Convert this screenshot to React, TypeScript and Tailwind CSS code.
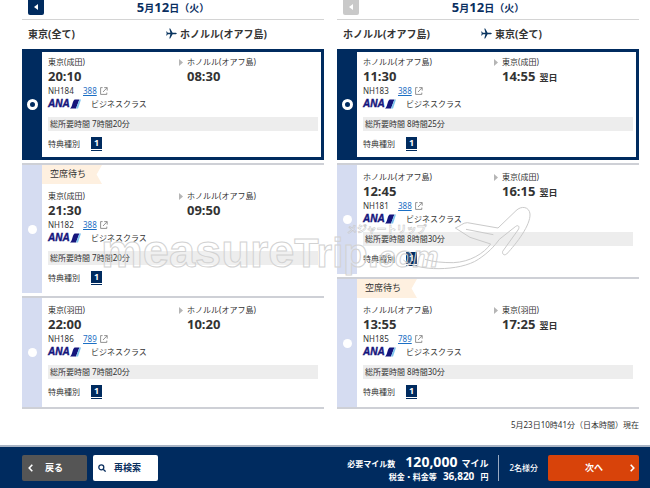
import React from "react";

interface Flight {
  from: string;
  dep: string;
  to: string;
  arr: string;
  nextDay?: boolean;
  no: string;
  craft: string;
  duration: string;
  waiting?: boolean;
}

interface Leg {
  id: string;
  from: string;
  to: string;
  prevDisabled: boolean;
  flights: Flight[];
}

const HNL = "ホノルル(オアフ島)";

const legs: Leg[] = [
  {
    id: "outbound",
    from: "東京(全て)",
    to: HNL,
    prevDisabled: false,
    flights: [
      { from: "東京(成田)", dep: "20:10", to: HNL, arr: "08:30", no: "NH184", craft: "388", duration: "7時間20分" },
      { from: "東京(成田)", dep: "21:30", to: HNL, arr: "09:50", no: "NH182", craft: "388", duration: "7時間20分", waiting: true },
      { from: "東京(羽田)", dep: "22:00", to: HNL, arr: "10:20", no: "NH186", craft: "789", duration: "7時間20分" },
    ],
  },
  {
    id: "inbound",
    from: HNL,
    to: "東京(全て)",
    prevDisabled: true,
    flights: [
      { from: HNL, dep: "11:30", to: "東京(成田)", arr: "14:55", nextDay: true, no: "NH183", craft: "388", duration: "8時間25分" },
      { from: HNL, dep: "12:45", to: "東京(成田)", arr: "16:15", nextDay: true, no: "NH181", craft: "388", duration: "8時間30分" },
      { from: HNL, dep: "13:55", to: "東京(羽田)", arr: "17:25", nextDay: true, no: "NH185", craft: "789", duration: "8時間30分", waiting: true },
    ],
  },
];

function PlaneIcon() {
  return (
    <svg viewBox="0 0 11 11" className="w-[11px] h-[11px] shrink-0" fill="#0a3560">
      <path d="M10.8 5.5c0-.5-.7-.8-1.6-.8H6.6L4.2.6H3.3l1.1 4.1H1.8L.9 3.6H.2l.5 1.9-.5 1.9h.7l.9-1.1h2.6l-1.1 4.1h.9l2.4-4.1h2.6c.9 0 1.6-.3 1.6-.8z" />
    </svg>
  );
}

function ExternalIcon() {
  return (
    <svg viewBox="0 0 8 8" className="w-2 h-2 shrink-0" fill="none" stroke="#777" strokeWidth="0.8">
      <path d="M2.6.6H.6v6.8h6.2V5.6M4.2.6h3v3M7 .8L3 5" />
    </svg>
  );
}

function AnaLogo() {
  return (
    <span className="flex items-center w-[33px] h-[10px] shrink-0">
      <span className="w-[22px] text-[10px] leading-[10px] font-bold italic text-[#15157c] font-['Liberation_Sans',sans-serif] [-webkit-text-stroke:0.4px_#15157c]">
        ANA
      </span>
      <svg viewBox="0 0 11 10" className="w-[11px] h-[10px] shrink-0">
        <path d="M0 9.4C2.4 8 2.4 1.8 4.6.4H9.4L6 9.4z" fill="#15157c" />
        <path d="M6 9.4L9.4.4H11L8 9.4z" fill="#7cc4ee" />
      </svg>
    </span>
  );
}

function FlightCard({ flight, leg, selected }: { flight: Flight; leg: string; selected: boolean }) {
  return (
    <div
      className={`flex ${
        selected ? "border-[3px] border-[#002b5f] bg-[#002b5f] mb-[3px]" : "border-t-2 border-[#ced0d6] pb-[3px] last:pb-0 last:border-b-2"
      }`}
    >
      <label
        className={`flex items-center justify-center shrink-0 ${selected ? "w-[17px] pr-[2px]" : "w-5 bg-[#d5dcf1]"}`}
      >
        <input
          type="radio"
          name={leg}
          defaultChecked={selected}
          aria-label={flight.no}
          className="appearance-none w-[9px] h-[9px] rounded-full bg-white checked:bg-[#002b5f] checked:border-[3px] checked:border-white checked:w-[11px] checked:h-[11px]"
        />
      </label>
      <div className="flex-1 min-w-0 bg-white">
        {flight.waiting && (
          <div className="w-[60px] h-[19px] pl-2 bg-[#fef0e0] text-[9px] leading-[18px] [clip-path:polygon(0_0,100%_0,91%_50%,100%_100%,0_100%)]">
            空席待ち
          </div>
        )}
        <div className={`pl-[6px] ${selected ? "pr-[3px] pt-1 pb-[6px]" : "pr-[6px] pt-[6px] pb-2"}`}>
          <div className="flex">
            <div className="w-[131px]">
              <p className="leading-3">{flight.from}</p>
              <p className="h-4 text-[13px] leading-4 font-bold">{flight.dep}</p>
            </div>
            <div className="flex gap-1">
              <span className="w-1 h-[7px] mt-[3px] bg-[#b5b5b5] [clip-path:polygon(0_0,100%_50%,0_100%)]" />
              <div>
                <p className="leading-3">{flight.to}</p>
                <p className="flex items-baseline h-4 gap-1 text-[13px] leading-4 font-bold">
                  {flight.arr}
                  {flight.nextDay && <span className="text-[9px] leading-3">翌日</span>}
                </p>
              </div>
            </div>
          </div>
          <div className="flex items-center h-3 mt-px">
            <span className="w-[35px]">{flight.no}</span>
            <a href="#" className="text-[#1b6fc4] underline mr-[3px]">
              {flight.craft}
            </a>
            <ExternalIcon />
          </div>
          <div className="flex items-center h-3 mt-px gap-[10px]">
            <AnaLogo />
            <span>ビジネスクラス</span>
          </div>
          <p className="mt-[7px] h-[14px] pl-[2px] bg-[#ededed] leading-[14px]">総所要時間 {flight.duration}</p>
          <div className="flex items-center h-[14px] mt-[6px] gap-[11px]">
            <span>特典種別</span>
            <span className="border-b border-[#002b5f] pb-px">
              <span className="flex items-center justify-center w-[11px] h-3 bg-[#002b5f] text-[9px] text-white font-bold">1</span>
            </span>
          </div>
        </div>
      </div>
    </div>
  );
}

function LegColumn({ leg }: { leg: Leg }) {
  return (
    <section className="flex-1 min-w-0">
      <div className="grid grid-cols-[1fr_auto_1fr] items-start h-5 border-b border-[#d4d4d4]">
        <button
          type="button"
          aria-label="前日"
          disabled={leg.prevDisabled}
          className="flex items-center justify-center w-4 h-[15px] ml-[6px] rounded-b-xs bg-[#002b5f] disabled:bg-[#c9c9c9]"
        >
          <span className="w-1 h-[6px] mb-px bg-white [clip-path:polygon(100%_0,0_50%,100%_100%)]" />
        </button>
        <h2 className="text-[10px] leading-[14px] font-bold text-[#0a2f5f]">
          <span className="text-[13px]">5</span>月<span className="text-[13px]">12</span>日（火）
        </h2>
      </div>
      <div className="flex items-center h-[29px] pb-[2px] pl-[6px] text-[10px] font-bold">
        <span className="w-[138px]">{leg.from}</span>
        <PlaneIcon />
        <span className="ml-[3px]">{leg.to}</span>
      </div>
      <div>
        {leg.flights.map((f, i) => (
          <FlightCard key={f.no} flight={f} leg={leg.id} selected={i === 0} />
        ))}
      </div>
    </section>
  );
}

// site watermark laid over the flight list
function Watermark() {
  return (
    <div className="pointer-events-none font-bold text-white/20 font-['Liberation_Sans',sans-serif] [-webkit-text-stroke:1px_#d2d2d2]">
      <div className="absolute left-[101px] top-[223px] flex items-baseline leading-[56px]">
        <span className="text-[47px]">measure</span>
        <span className="text-[40px]">Trip.</span>
        <span className="text-[29px] italic">com</span>
      </div>
      <span className="absolute left-[347px] top-[223px] text-[10px] font-['Noto_Sans_CJK_JP',sans-serif] [-webkit-text-stroke:0.5px_#c4c4c4]">
        メジャートリップ
      </span>
      <svg viewBox="0 0 510 225" className="absolute left-[370px] top-[200px] w-[170px] h-[75px]" fill="none" stroke="#cacaca" strokeWidth="3">
        <path d="M100 180C140 215 270 215 325 178C355 158 372 140 388 118L436 80C446 72 450 82 444 90L398 154C396 162 402 168 410 162C440 130 482 75 480 42C478 20 454 16 438 32L384 84L292 68C278 68 272 78 256 84L300 112L362 132C342 160 300 186 250 188C220 188 190 186 165 178" />
        <path d="M288 88L370 104" />
      </svg>
    </div>
  );
}

export default function App() {
  return (
    <div className="relative bg-white text-[8px] leading-3 text-[#333] font-['Noto_Sans','Noto_Sans_CJK_JP',sans-serif]">
      <main className="flex gap-[13px] pl-[22px] pr-[11px]">
        {legs.map((leg) => (
          <LegColumn key={leg.id} leg={leg} />
        ))}
      </main>
      <p className="pr-[11px] pt-[10px] pb-[14px] text-right">5月23日10時41分（日本時間）現在</p>
      <footer className="flex items-center justify-between pl-[22px] pr-[11px] pt-2 pb-[7px] border-t-2 border-[#a9b4c4] bg-[#002b5f] text-white font-bold">
        <div className="flex gap-[6px]">
          <button type="button" className="flex items-center w-[65px] h-[26px] pl-[6px] gap-3 rounded-xs bg-[#555] text-[9px]">
            <svg viewBox="0 0 5 8" className="w-[5px] h-2" fill="none" stroke="#fff" strokeWidth="1.6">
              <path d="M4.3.8L1.2 4l3.1 3.2" />
            </svg>
            戻る
          </button>
          <button type="button" className="flex items-center w-[65px] h-[26px] pl-[5px] gap-2 rounded-xs bg-white text-[9px] text-[#0a2f5f]">
            <svg viewBox="0 0 8 8" className="w-2 h-2" fill="none" stroke="#0a2f5f" strokeWidth="1.3">
              <circle cx="3.3" cy="3.3" r="2.5" />
              <path d="M5.2 5.2l2.4 2.4" />
            </svg>
            再検索
          </button>
        </div>
        <div className="flex items-center">
          <div className="pr-[10px] border-r border-[#9aaac2] text-right">
            <p className="h-[14px] leading-[14px]">
              必要マイル数 <span className="text-[14px] ml-2 mr-1">120,000</span>
              <span className="text-[9px]">マイル</span>
            </p>
            <p className="h-3 leading-[14px]">
              税金・料金等 <span className="text-[10px] mx-1">36,820</span> 円
            </p>
          </div>
          <span className="px-[10px] font-medium">2名様分</span>
          <button type="button" className="flex items-center justify-end w-[91px] h-[26px] pr-1 gap-[27px] rounded-xs bg-[#d8430a] text-[9px]">
            次へ
            <svg viewBox="0 0 5 8" className="w-[5px] h-2" fill="none" stroke="#fff" strokeWidth="1.6">
              <path d="M.7.8L3.8 4 .7 7.2" />
            </svg>
          </button>
        </div>
      </footer>
      <Watermark />
    </div>
  );
}
